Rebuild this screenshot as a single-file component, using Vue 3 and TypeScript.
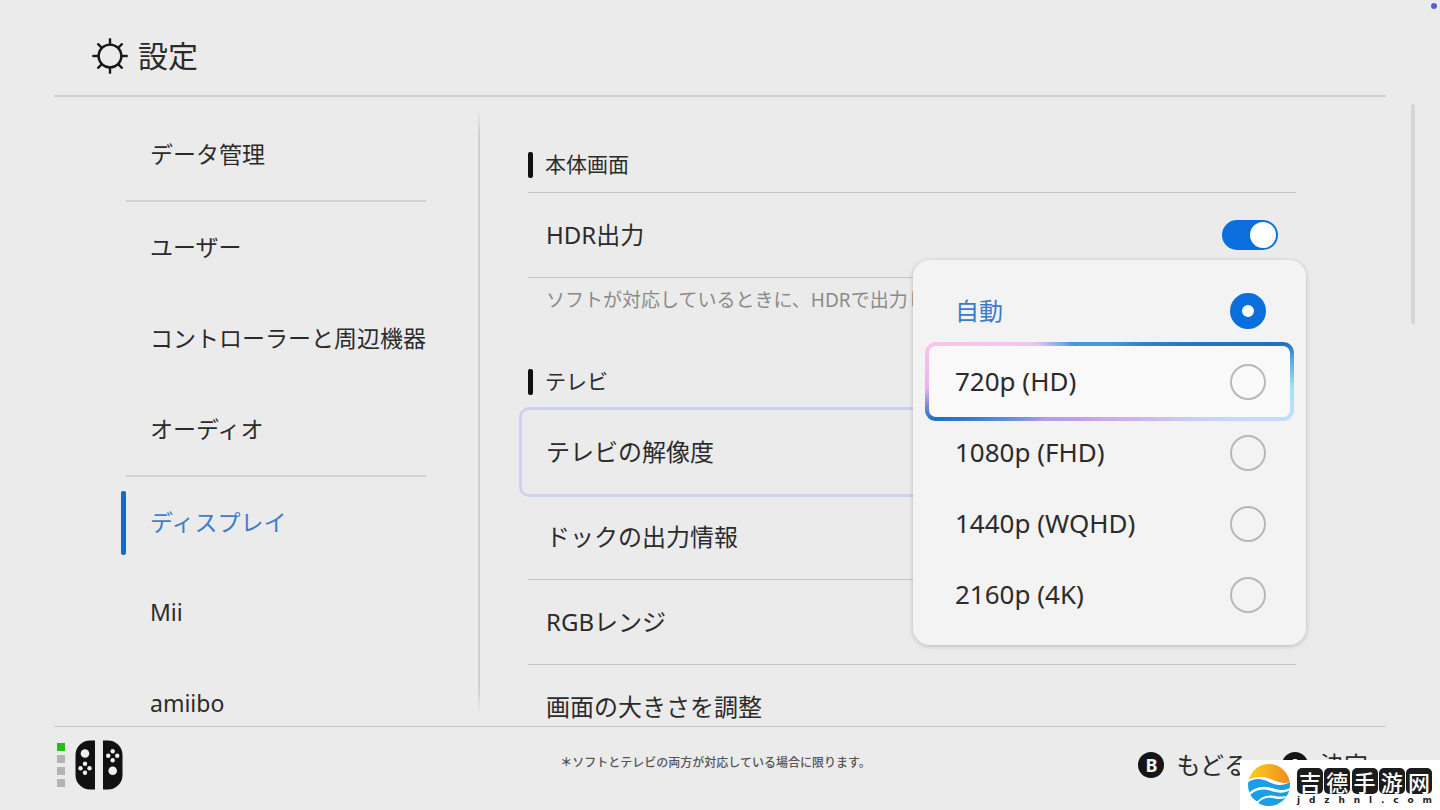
<script setup lang="ts">
import { ref } from 'vue'

interface MenuItem {
  label: string
  separated?: boolean
}

const menu: MenuItem[] = [
  { label: 'データ管理', separated: true },
  { label: 'ユーザー' },
  { label: 'コントローラーと周辺機器' },
  { label: 'オーディオ', separated: true },
  { label: 'ディスプレイ' },
  { label: 'Mii' },
  { label: 'amiibo' },
]
const activeMenu = ref('ディスプレイ')

const hdr = ref(true)
const tvRows: string[] = ['テレビの解像度', 'ドックの出力情報', 'RGBレンジ', '画面の大きさを調整']
const openRow = ref('テレビの解像度')

const resolutions: string[] = ['自動', '720p (HD)', '1080p (FHD)', '1440p (WQHD)', '2160p (4K)']
const resolution = ref('自動')
const focused = ref('720p (HD)')

const rays: number[] = [0, 45, 90, 135, 180, 225, 270, 315]
const players: boolean[] = [true, false, false, false]
const siteName: string[] = ['吉', '德', '手', '游', '网']
const siteHost: string[] = ['j', 'd', 'z', 'h', 'n', 'l', '.', 'c', 'o', 'm']
</script>

<template>
  <div class="screen">
    <header class="top">
      <svg class="gear" viewBox="0 0 36 36" aria-hidden="true">
        <circle cx="18" cy="18" r="11.4" />
        <line v-for="r in rays" :key="r" x1="18" y1="0.3" x2="18" y2="6.8" :transform="`rotate(${r} 18 18)`" />
      </svg>
      <h1>設定</h1>
    </header>

    <div class="body">
      <nav class="side">
        <ul>
          <li v-for="m in menu" :key="m.label" :class="{ separated: m.separated }">
            <button type="button" :class="{ active: m.label === activeMenu }" @click="activeMenu = m.label">
              <span class="text">{{ m.label }}</span>
            </button>
          </li>
        </ul>
      </nav>

      <main class="content">
        <h2 class="ruled"><span class="text">本体画面</span></h2>
        <label class="row">
          <span class="text">HDR出力</span>
          <input v-model="hdr" class="switch" type="checkbox" role="switch" />
        </label>
        <p class="note">ソフトが対応しているときに、HDRで出力し</p>
        <h2><span class="text">テレビ</span></h2>
        <button v-for="r in tvRows" :key="r" type="button" class="row" :class="{ open: r === openRow }">
          <span class="text">{{ r }}</span>
        </button>

        <fieldset class="popup" aria-label="テレビの解像度">
          <label v-for="o in resolutions" :key="o" class="option" :class="{ focused: o === focused, chosen: o === resolution }">
            <span>{{ o }}</span>
            <input v-model="resolution" type="radio" name="resolution" :value="o" @focus="focused = o" />
          </label>
        </fieldset>
      </main>

      <div class="track"><div class="thumb"></div></div>
    </div>

    <footer class="bottom">
      <div class="pads">
        <div class="leds"><i v-for="(on, i) in players" :key="i" :class="{ on }"></i></div>
        <svg viewBox="0 0 48 50" aria-hidden="true">
          <path d="M20 0.5V49.5H15A14.5 14.5 0 0 1 0.5 35V15A14.5 14.5 0 0 1 15 0.5Z" />
          <path d="M28 0.5V49.5H33A14.5 14.5 0 0 0 47.5 35V15A14.5 14.5 0 0 0 33 0.5Z" />
          <g class="hole">
            <circle cx="10" cy="13.5" r="4.3" />
            <circle cx="10" cy="23.8" r="2.2" /><circle cx="10" cy="32.8" r="2.2" />
            <circle cx="5.5" cy="28.3" r="2.2" /><circle cx="14.5" cy="28.3" r="2.2" />
            <circle cx="37.7" cy="30.8" r="4.3" />
            <circle cx="37.7" cy="11.3" r="2.2" /><circle cx="37.7" cy="20.3" r="2.2" />
            <circle cx="33.2" cy="15.8" r="2.2" /><circle cx="42.2" cy="15.8" r="2.2" />
          </g>
        </svg>
      </div>
      <p class="caption"><b>＊</b>ソフトとテレビの両方が対応している場合に限ります。</p>
      <div class="hints">
        <button type="button"><b>B</b><span class="text">もどる</span></button>
        <button type="button"><b>A</b><span class="text">決定</span></button>
      </div>
    </footer>

    <div class="dot"></div>

    <div class="brand">
      <svg viewBox="0 0 42 42" aria-hidden="true">
        <defs>
          <clipPath id="disc"><circle cx="21" cy="21" r="21" /></clipPath>
          <linearGradient id="sun" x1="0" y1="0" x2="1" y2="0">
            <stop offset="0" stop-color="#fcd01f" />
            <stop offset="1" stop-color="#f08a1d" />
          </linearGradient>
        </defs>
        <g clip-path="url(#disc)">
          <rect width="42" height="42" fill="#fff" />
          <path d="M0 0H42V18C34 21 28 17 21 14.5C13 12 6 13 0 16Z" fill="url(#sun)" />
          <path d="M0 18C8 13 15 15 22 18.5C29 22 36 21.5 42 18V24C34 28 28 25 22 23.5C13 21.5 7 24 2 28L0 30Z" fill="#1a9fe6" />
          <path d="M2 31C8 25.5 15 24.5 22 26.5C29 29 36 30 42 26V31C34 34 29 32 24 31.5C18 31 13 33 9 37.5L4 34Z" fill="#1a9fe6" />
          <path d="M9 40C15 33 22 33 27 34.5C33 36 37 34.5 42 31V42H9Z" fill="#1a9fe6" />
        </g>
      </svg>
      <div class="words">
        <div class="name"><span v-for="c in siteName" :key="c">{{ c }}</span></div>
        <div class="host"><span v-for="(c, i) in siteHost" :key="i">{{ c }}</span></div>
      </div>
    </div>
  </div>
</template>

<style>
body {
  margin: 0;
  background: #ebebeb;
}
</style>

<style scoped>
.screen {
  position: relative;
  display: flex;
  flex-direction: column;
  height: 100vh;
  overflow: hidden;
  background: #ebebeb;
  color: #2b2b2b;
  font-family: "Noto Sans", "Noto Sans CJK JP", sans-serif;
  font-size: 24px;
}
h1, h2, p, ul {
  margin: 0;
  padding: 0;
  font-weight: 400;
}
ul {
  list-style: none;
}
button {
  margin: 0;
  padding: 0;
  border: 0;
  background: none;
  color: inherit;
  font: inherit;
  text-align: left;
  cursor: pointer;
}
input {
  appearance: none;
  margin: 0;
  flex: none;
}
.text {
  padding-bottom: 4px;
}

.top {
  display: flex;
  align-items: center;
  gap: 10px;
  height: 79px;
  margin: 0 54px;
  padding: 16px 38px 0;
  border-bottom: 2px solid #cfcfcf;
}
.gear {
  width: 36px;
  height: 36px;
  fill: none;
  stroke: #161616;
  stroke-width: 2.4;
}
h1 {
  font-size: 30px;
  line-height: 40px;
}

.body {
  display: flex;
  flex: 1;
  min-height: 0;
}
.side {
  position: relative;
  width: 426px;
  padding: 12px 0 0 54px;
  overflow: hidden;
}
.side::after {
  content: "";
  position: absolute;
  top: 12px;
  right: 0;
  bottom: 12px;
  width: 2px;
  background: linear-gradient(transparent, #d0d0d0 24px, #d0d0d0 calc(100% - 24px), transparent);
}
.side li {
  margin: 0 54px 0 72px;
}
.side li.separated {
  border-bottom: 2px solid #d2d2d2;
}
.side button {
  position: relative;
  display: flex;
  align-items: center;
  width: 100%;
  height: 91px;
  padding-left: 24px;
  font-size: 23px;
  white-space: nowrap;
}
.side button.active {
  color: #3f7cca;
}
.side button.active::before {
  content: "";
  position: absolute;
  left: -5px;
  width: 5px;
  height: 64px;
  border-radius: 2px;
  background: #106cc4;
}

.content {
  position: relative;
  flex: 1;
  min-width: 0;
  padding: 41px 90px 0 48px;
}
h2 {
  display: flex;
  align-items: center;
  gap: 12px;
  height: 54px;
  font-size: 21px;
  border-bottom: 1px solid transparent;
}
h2::before {
  content: "";
  width: 5px;
  height: 26px;
  border-radius: 2px;
  background: #111;
}
h2.ruled {
  border-color: #c6c6c6;
}
.row {
  position: relative;
  display: flex;
  align-items: center;
  justify-content: space-between;
  box-sizing: border-box;
  width: 100%;
  height: 85px;
  padding: 0 18px;
  border-bottom: 1px solid #c6c6c6;
}
.row.open {
  border-color: transparent;
}
.row.open::before {
  content: "";
  position: absolute;
  inset: -3px -9px;
  border: 3px solid;
  border-color: #cdd0ee #cbd8e8 #cbd6e8 #d2cfee;
  border-radius: 10px;
}
.note {
  height: 67px;
  padding: 10px 18px 0;
  color: #8a8a8a;
  font-size: 19px;
  line-height: 24px;
  white-space: nowrap;
}

.switch {
  display: flex;
  align-items: center;
  box-sizing: border-box;
  width: 56px;
  height: 30px;
  padding: 2px;
  border-radius: 15px;
  background: #a8a8a8;
}
.switch::before {
  content: "";
  width: 26px;
  height: 26px;
  border-radius: 50%;
  background: #fff;
}
.switch:checked {
  justify-content: flex-end;
  background: #0a6fdc;
}

.popup {
  position: absolute;
  top: 163px;
  right: 80px;
  box-sizing: border-box;
  width: 393px;
  margin: 0;
  padding: 15px 12px;
  border: 0;
  border-radius: 17px;
  background: #f3f3f3;
  box-shadow: 0 1px 5px rgba(0, 0, 0, 0.22);
}
.option {
  position: relative;
  display: flex;
  align-items: center;
  justify-content: space-between;
  height: 71px;
  padding: 0 28px 0 30px;
  font-size: 26px;
}
.option span,
.option input {
  position: relative;
}
.option span {
  padding-bottom: 2px;
}
.option.chosen {
  color: #3a7bc8;
  font-size: 24px;
}
.option.focused::before {
  content: "";
  position: absolute;
  inset: -4px 0;
  border: 4px solid transparent;
  border-radius: 11px;
  background:
    linear-gradient(#f9f9fa, #f9f9fa) padding-box,
    conic-gradient(#4a98dc 0deg, #1d74bd 78deg, #5aa6d8 83deg, #a6e2f0 92deg, #c4dcff 102deg, #cfb4f2 135deg, #d0a2ee 200deg, #b39ceb 240deg, #4f8bd8 252deg, #1d6fc2 258deg, #8a8ce2 263deg, #e9b4f0 268deg, #fac6ea 282deg, #f0c4f0 296deg, #8ab0ea 306deg, #4a96dc 316deg, #4a98dc 360deg) border-box;
}
.option input {
  box-sizing: border-box;
  width: 36px;
  height: 36px;
  border: 2px solid #b8b8b8;
  border-radius: 50%;
}
.option input:checked {
  border: 12px solid #0a6fdc;
  background: #fff;
}

.track {
  width: 54px;
  padding-top: 7px;
  box-sizing: border-box;
}
.thumb {
  width: 4px;
  height: 220px;
  margin-left: 25px;
  border-radius: 2px;
  background: #d6d6d6;
}

.bottom {
  display: grid;
  grid-template-columns: 1fr auto 1fr;
  align-items: center;
  position: relative;
  z-index: 1;
  height: 76px;
  margin: 0 54px;
  padding: 0 18px 7px 3px;
  border-top: 1px solid #c9c9c9;
  background: #ebebeb;
}
.pads {
  display: flex;
  align-items: center;
  gap: 10px;
}
.leds {
  display: grid;
  gap: 4px;
}
.leds i {
  width: 8px;
  height: 8px;
  background: #b4b4b4;
}
.leds .on {
  background: #25bd1c;
}
.pads svg {
  width: 48px;
  height: 50px;
  fill: #111;
}
.hole {
  fill: #f0f0f0;
}
.caption {
  padding: 0 0 6px 6px;
  color: #555;
  font-size: 12px;
  font-weight: 500;
}
.hints {
  display: flex;
  justify-content: flex-end;
  gap: 34px;
}
.hints button {
  display: flex;
  align-items: center;
  gap: 12px;
}
.hints b {
  width: 26px;
  border-radius: 50%;
  background: #151515;
  color: #f0f0f0;
  font-size: 18px;
  line-height: 26px;
  text-align: center;
}

.dot {
  position: absolute;
  top: 3px;
  right: 3px;
  width: 6px;
  height: 6px;
  border-radius: 50%;
  background: #5b5ed0;
}

.brand {
  position: absolute;
  z-index: 2;
  right: 0;
  bottom: 0;
  display: flex;
  align-items: center;
  gap: 7px;
  box-sizing: border-box;
  width: 200px;
  height: 50px;
  padding: 0 8px;
  background: #fff;
}
.brand svg {
  flex: none;
  width: 42px;
  height: 42px;
}
.words {
  flex: 1;
  padding-top: 4px;
}
.name,
.host {
  display: flex;
  justify-content: space-between;
}
.name span {
  width: 26px;
  border-radius: 5px;
  background: #1c1c1c;
  color: #fff;
  font-family: "Noto Sans CJK SC", sans-serif;
  font-size: 22px;
  font-weight: 500;
  line-height: 26px;
  text-align: center;
}
.host {
  color: #222;
  font-family: "DejaVu Sans", sans-serif;
  font-size: 9px;
  font-weight: 700;
  line-height: 12px;
}
</style>
